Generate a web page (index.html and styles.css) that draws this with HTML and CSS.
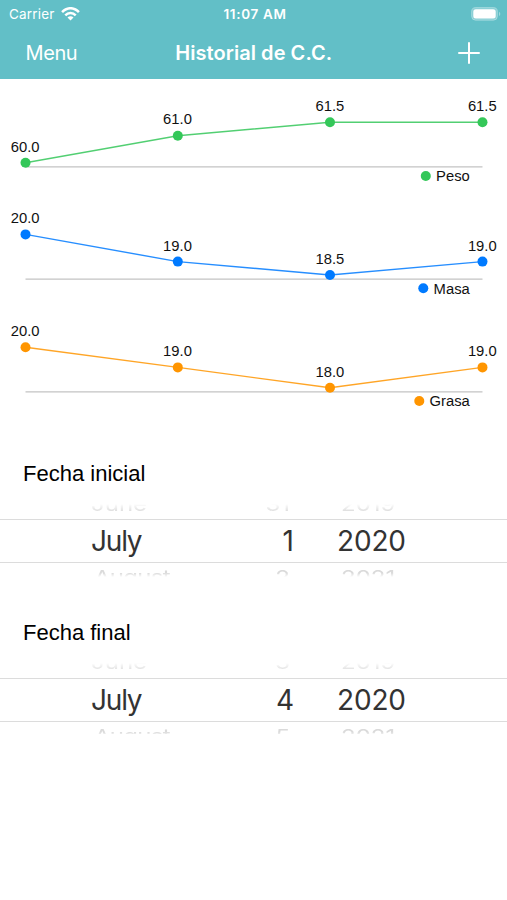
FILE: index.html
```html
<!DOCTYPE html>
<html lang="es">
<head>
<meta charset="utf-8">
<meta name="viewport" content="width=device-width">
<title>Historial de C.C.</title>
<link rel="stylesheet" href="styles.css">
</head>
<body>
<header class="header">
  <div class="status">
    <div class="carrier"><span>Carrier</span>
      <svg class="wifi" width="19" height="14" viewBox="0 0 19 14" fill="none" stroke="#fff" stroke-width="2.5"><path d="M1.1 5.1C6-.1 13-.1 17.9 5.1M4.3 8.3C7.2 5.3 11.8 5.3 14.7 8.3"/><path d="M9.5 13.4 6.5 10.4C8.3 8.8 10.7 8.8 12.5 10.4Z" fill="#fff" stroke="none"/></svg>
    </div>
    <div class="time">11:07 AM</div>
    <svg class="battery" width="30" height="14" viewBox="0 0 30 14"><rect x=".6" y=".6" width="25.8" height="12.6" rx="4" fill="#fff" fill-opacity=".25" stroke="#fff" stroke-opacity=".3"/><rect x="2.3" y="2.3" width="22.4" height="9.2" rx="2.5" fill="#fff"/><path d="M28 4.8Q30.6 7 28 9.2Z" fill="#fff" fill-opacity=".4"/></svg>
  </div>
  <nav class="nav">
    <span class="menu">Menu</span>
    <h1 class="title">Historial de C.C.</h1>
    <svg class="plus" width="22" height="22" viewBox="0 0 22 22" stroke="#fff" stroke-width="2" stroke-linecap="round"><path d="M1 11H21M11 1V21"/></svg>
  </nav>
</header>
<main>
  <section class="charts">
    <svg class="chart green" viewBox="0 0 507 112.4">
      <path class="axis" d="M25.5 87.8H482.5"/>
      <path class="line" d="M25.5 83.8 177.8 56.8 330 43.2H482.5"/>
      <circle cx="25.5" cy="83.8" r="5"/><circle cx="177.8" cy="56.8" r="5"/><circle cx="330" cy="43.2" r="5"/><circle cx="482.5" cy="43.2" r="5"/>
      <text x="25.2" y="72.7">60.0</text><text x="177.5" y="45.5">61.0</text><text x="329.9" y="32">61.5</text><text x="482.3" y="32">61.5</text>
      <circle cx="425.8" cy="97" r="5"/><text class="legend" x="469.8" y="102.3">Peso</text>
    </svg>
    <svg class="chart blue" viewBox="0 0 507 112.4">
      <path class="axis" d="M25.5 88.1H482.5"/>
      <path class="line" d="M25.5 43.4 177.8 70.6 330 84 482.5 70.6"/>
      <circle cx="25.5" cy="43.4" r="5"/><circle cx="177.8" cy="70.6" r="5"/><circle cx="330" cy="84" r="5"/><circle cx="482.5" cy="70.6" r="5"/>
      <text x="25.2" y="32.4">20.0</text><text x="177.5" y="59.7">19.0</text><text x="329.9" y="73">18.5</text><text x="482.3" y="59.7">19.0</text>
      <circle cx="423.3" cy="97.2" r="5"/><text class="legend" x="469.8" y="103">Masa</text>
    </svg>
    <svg class="chart orange" viewBox="0 0 507 112.4">
      <path class="axis" d="M25.5 87.8H482.5"/>
      <path class="line" d="M25.5 43.2 177.8 63.4 330 83.8 482.5 63.4"/>
      <circle cx="25.5" cy="43.2" r="5"/><circle cx="177.8" cy="63.4" r="5"/><circle cx="330" cy="83.8" r="5"/><circle cx="482.5" cy="63.4" r="5"/>
      <text x="25.2" y="32">20.0</text><text x="177.5" y="52.3">19.0</text><text x="329.9" y="72.7">18.0</text><text x="482.3" y="52.3">19.0</text>
      <circle cx="419.3" cy="97" r="5"/><text class="legend" x="469.8" y="102.3">Grasa</text>
    </svg>
  </section>
  <section class="date">
    <h2>Fecha inicial</h2>
    <div class="picker">
      <div class="row before"><span class="month">June</span><span class="day">31</span><span class="year">2019</span></div>
      <div class="row current"><span class="month">July</span><span class="day">1</span><span class="year">2020</span></div>
      <div class="row after"><span class="month">August</span><span class="day">2</span><span class="year">2021</span></div>
    </div>
  </section>
  <section class="date">
    <h2>Fecha final</h2>
    <div class="picker">
      <div class="row before"><span class="month">June</span><span class="day">3</span><span class="year">2019</span></div>
      <div class="row current"><span class="month">July</span><span class="day">4</span><span class="year">2020</span></div>
      <div class="row after"><span class="month">August</span><span class="day">5</span><span class="year">2021</span></div>
    </div>
  </section>
</main>
</body>
</html>
```
FILE: styles.css
```css
* { box-sizing: border-box; }
body { margin: 0; background: #fff; font-family: Inter, "Liberation Sans", sans-serif; color: #000; }
.header { height: 79px; background: #62bfc7; color: #fff; }
.status { height: 27px; display: grid; grid-template-columns: 1fr auto 1fr; align-items: center; padding: 0 6px 0 9px; }
.carrier { display: flex; align-items: center; gap: 6px; font-size: 13.5px; letter-spacing: .2px; line-height: 16px; }
.time { font-size: 13.5px; font-weight: 600; line-height: 16px; letter-spacing: .65px; }
.battery { justify-self: end; }
.nav { height: 51px; display: grid; grid-template-columns: 1fr auto 1fr; align-items: center; padding: 0 27px 0 25.5px; }
.menu { font-size: 20px; line-height: 24px; letter-spacing: -.4px; }
.title { margin: 0 -1px 0 1px; font-size: 20px; line-height: 24px; font-weight: 600; letter-spacing: .05px; }
.plus { justify-self: end; }
.charts { display: flex; flex-direction: column; height: 337.2px; }
.chart { display: block; width: 507px; height: 112.4px; }
.green { --series: #34c759; }
.blue { --series: #007aff; }
.orange { --series: #ff9500; }
.axis { stroke: #c3c3c3; stroke-width: 1.3; }
.line { fill: none; stroke: var(--series); stroke-width: 1.4; stroke-opacity: .85; }
.chart circle { fill: var(--series); }
.chart text { font: 14.8px "Liberation Sans", sans-serif; text-anchor: middle; fill: #111; }
.chart .legend { text-anchor: end; }
.date { height: 158.8px; padding-top: 44.8px; }
.date h2 { margin: 0 0 17px; padding-left: 23px; font: 22px/26px "Liberation Sans", sans-serif; }
.picker { height: 73px; overflow: hidden; display: grid; grid-template-rows: 15px 44px 14px; }
.row { display: grid; grid-template-columns: 202px 92px 43px 170px; grid-template-rows: 100%; overflow: hidden; }
.month { padding-left: 91px; }
.day { text-align: right; }
.year { grid-column: 4; }
.current { border: solid #dcdcdc; border-width: 1px 0; font-size: 28px; line-height: 42px; color: #333; }
.current .month { letter-spacing: -1.2px; }
.current .year { letter-spacing: -.15px; }
.before, .after { font-size: 24px; line-height: 24px; color: #dadada; }
.before { align-items: end; -webkit-mask-image: linear-gradient(transparent, #000 8px); mask-image: linear-gradient(transparent, #000 8px); }
.after { align-items: start; -webkit-mask-image: linear-gradient(#000 10px, transparent); mask-image: linear-gradient(#000 10px, transparent); }
.before span, .after span { transform: scaleY(.8); }
.before span { transform-origin: bottom; margin-bottom: 5.4px; }
.after span { transform-origin: top; margin-top: 5.4px; }
.before .day, .after .day { padding-right: 4px; }
.before .year, .after .year { padding-left: 4px; }
.after .month { padding-left: 94px; letter-spacing: -.7px; }
```
